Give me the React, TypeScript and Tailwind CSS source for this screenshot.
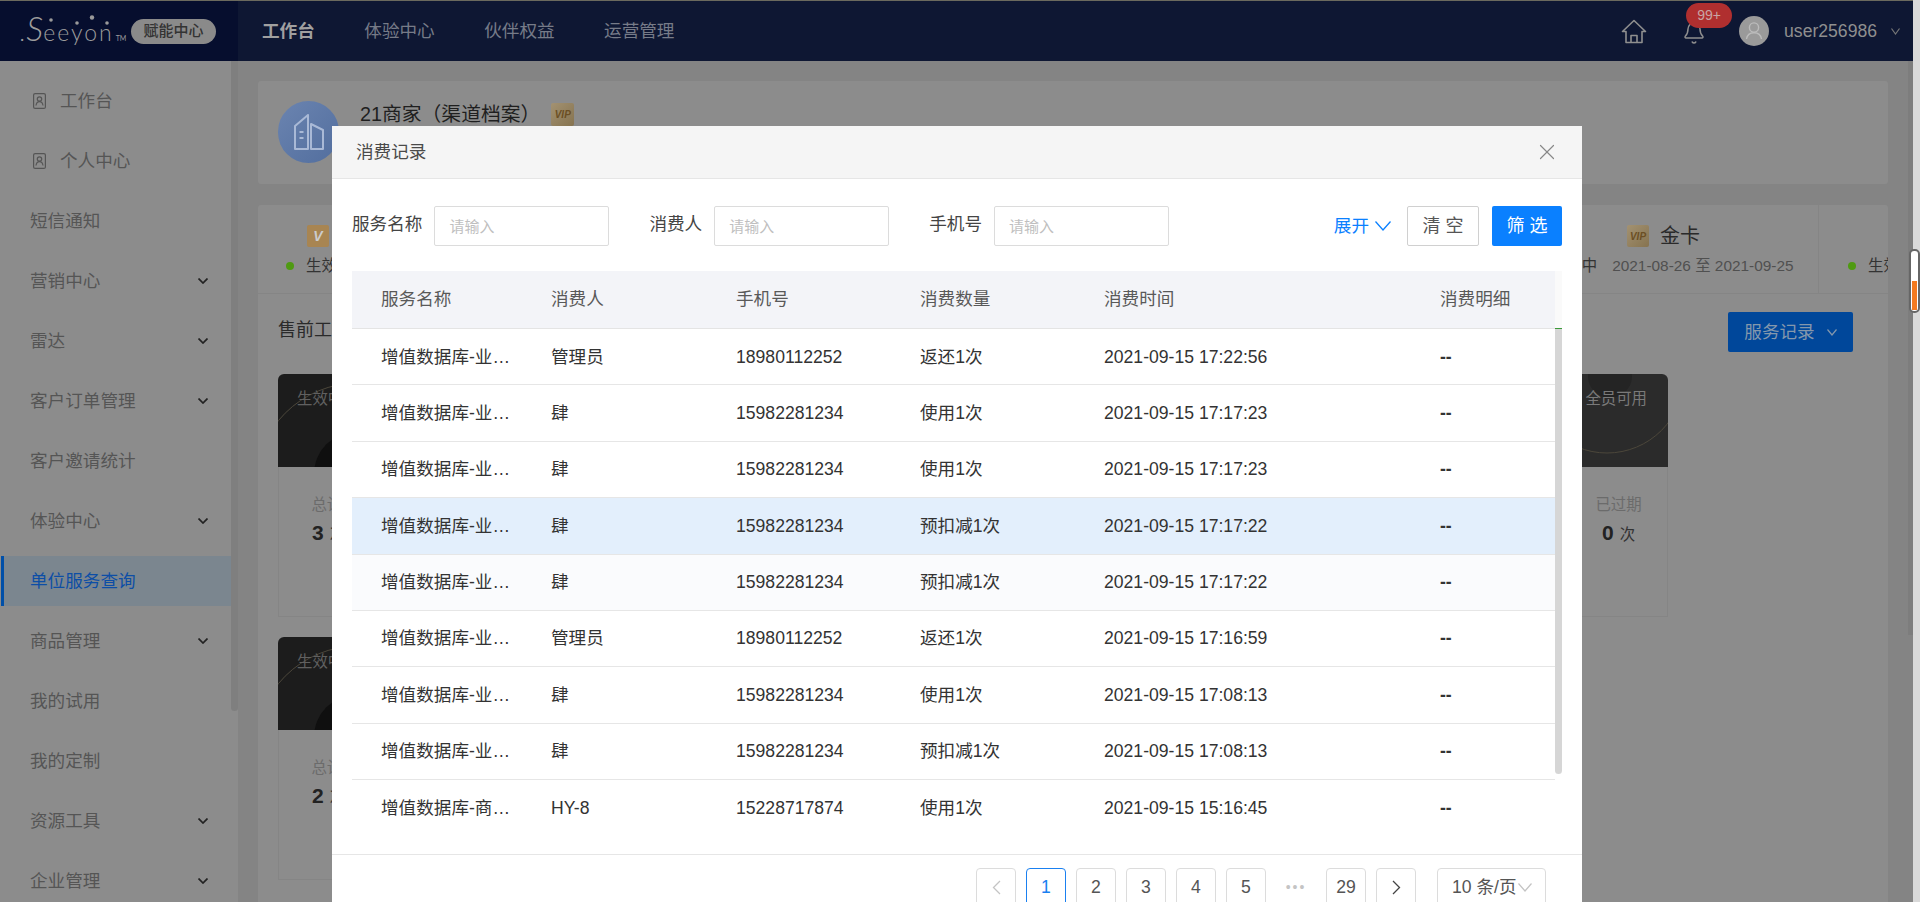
import { Bell, X } from 'lucide-react';

const sideItems = [
  { label: '工作台', icon: true },
  { label: '个人中心', icon: true },
  { label: '短信通知' },
  { label: '营销中心', more: true },
  { label: '雷达', more: true },
  { label: '客户订单管理', more: true },
  { label: '客户邀请统计' },
  { label: '体验中心', more: true },
  { label: '单位服务查询', active: true },
  { label: '商品管理', more: true },
  { label: '我的试用' },
  { label: '我的定制' },
  { label: '资源工具', more: true },
  { label: '企业管理', more: true },
];

const records = [
  ['增值数据库-业务线索', '管理员', '18980112252', '返还1次', '2021-09-15 17:22:56'],
  ['增值数据库-业务线索', '肆', '15982281234', '使用1次', '2021-09-15 17:17:23'],
  ['增值数据库-业务线索', '肆', '15982281234', '使用1次', '2021-09-15 17:17:23'],
  ['增值数据库-业务线索', '肆', '15982281234', '预扣减1次', '2021-09-15 17:17:22'],
  ['增值数据库-业务线索', '肆', '15982281234', '预扣减1次', '2021-09-15 17:17:22'],
  ['增值数据库-业务线索', '管理员', '18980112252', '返还1次', '2021-09-15 17:16:59'],
  ['增值数据库-业务线索', '肆', '15982281234', '使用1次', '2021-09-15 17:08:13'],
  ['增值数据库-业务线索', '肆', '15982281234', '预扣减1次', '2021-09-15 17:08:13'],
  ['增值数据库-商机线索', 'HY-8', '15228717874', '使用1次', '2021-09-15 15:16:45'],
];

const gridCols = 'grid grid-cols-[199px_185px_184px_184px_336px_1fr]';

// the reference uses wide, shallow chevrons, lucide's are too narrow at these sizes
function Chevron({ width, height, color, weight = 1.2 }: { width: number; height: number; color: string; weight?: number }) {
  return (
    <svg className="shrink-0" width={width} height={height} viewBox={`0 0 ${width} ${height}`} fill="none" stroke={color} strokeWidth={weight}>
      <path d={`M0.5 0.5 L${width / 2} ${height - 1} L${width - 0.5} 0.5`} />
    </svg>
  );
}

function PageArrow({ direction, color }: { direction: 'left' | 'right'; color: string }) {
  return (
    <svg width="9" height="15" viewBox="0 0 9 15" fill="none" stroke={color} strokeWidth="1.3">
      <path d={direction === 'left' ? 'M8 1 1.500 7.500 8 14' : 'M1 1l6.500 6.500L1 14'} />
    </svg>
  );
}

function ProfileIcon() {
  return (
    <svg width="13" height="16" viewBox="0 0 13 16" fill="none" stroke="#555" strokeWidth="1.2">
      <rect x="0.6" y="0.6" width="11.800" height="14.800" rx="1.500" />
      <circle cx="6.500" cy="6" r="2.200" />
      <path d="M3 12.500c.4-2.500 1.800-3.800 3.500-3.800s3.100 1.300 3.500 3.800" />
    </svg>
  );
}

function VipBadge({ size = 'h-[22px] w-[22px]' }: { size?: string }) {
  return (
    <span className={`flex shrink-0 items-center justify-center rounded-[2px] bg-gradient-to-br from-[#a39272] to-[#86734f] text-[10px] font-bold italic text-[#6b4f24] ${size}`}>
      VIP
    </span>
  );
}

function Sidebar() {
  return (
    <aside className="relative flex w-[238px] shrink-0 flex-col gap-[10px] overflow-hidden bg-[#8c8c8c] pt-[15px] pr-[7px]">
      {sideItems.map((item) => (
        <div
          key={item.label}
          className={`ml-[1px] flex h-[50px] shrink-0 items-center text-[17.6px] ${
            item.active
              ? 'border-l-[3px] border-[#004fa8] bg-[#7b868f] pl-[26px] text-[#0d4ea6]'
              : 'pl-[29px] text-[#555]'
          }`}
        >
          {item.icon && (
            <span className="mr-[14px] ml-[3px] flex">
              <ProfileIcon />
            </span>
          )}
          <span>{item.label}</span>
          {item.more && (
            <span className="mr-[23px] ml-auto">
              <Chevron width={10} height={6} color="#222" weight={1.7} />
            </span>
          )}
        </div>
      ))}
      <div className="absolute top-0 right-0 h-[650px] w-[7px] rounded-b-[4px] bg-[#7f7f7f]" />
    </aside>
  );
}

function Header() {
  return (
    <header className="flex h-[61px] shrink-0 border-t border-[#6b6a5e] bg-[#0e1733] text-[#8f8f8f]">
      <div className="relative flex w-[238px] shrink-0 items-center bg-[#060e2e] pl-[20px]">
        <svg className="absolute top-[14px] left-[40px]" width="72" height="14" viewBox="0 0 72 14" fill="#9a9a9a">
          <circle cx="11" cy="5" r="1.800" />
          <circle cx="37" cy="8" r="1.800" />
          <circle cx="52" cy="2.500" r="2.200" />
          <circle cx="67" cy="8" r="1.800" />
        </svg>
        <span className="mt-[7px] flex items-baseline font-['Lato',sans-serif] text-[#9c9c9c]">
          <span className="text-[18px]">.</span>
          <span className="ml-[2px] text-[34px] leading-none font-light italic">S</span>
          <span className="text-[23px] leading-none font-light tracking-[2px]">eeyon</span>
          <span className="mb-[14px] ml-[2px] text-[7px]">TM</span>
        </span>
        <span className="absolute top-[18px] left-[131px] flex h-[25px] w-[85px] items-center justify-center rounded-full bg-[#8a8a8a] text-[15px] font-medium text-[#333]">
          赋能中心
        </span>
      </div>
      <nav className="ml-[24px] flex items-center gap-[49.5px] text-[17.6px] text-[#767b88]">
        <span className="font-bold text-[#a0a0a0]">工作台</span>
        <span>体验中心</span>
        <span>伙伴权益</span>
        <span>运营管理</span>
      </nav>
      <div className="ml-auto flex items-center pr-[13px]">
        <svg width="26" height="25" viewBox="0 0 26 25" fill="none" stroke="#8f8f8f" strokeWidth="1.6" strokeLinejoin="round">
          <path d="M1.500 12.500 13 1.500l11.500 11h-3.500v11H5v-11z" />
          <path d="M10 23.500v-7h6v7" />
        </svg>
        <span className="relative ml-[31px] flex w-[32px] justify-center">
          <Bell className="mt-[4px] h-[24px] w-[24px]" strokeWidth={1.5} />
          <span className="absolute -top-[14px] left-[8px] flex h-[25px] w-[46px] items-center justify-center rounded-full bg-[#b02f2f] text-[14px] text-[#c9a5a5]">
            99+
          </span>
        </span>
        <span className="ml-[29px] flex h-[30px] w-[30px] items-center justify-center rounded-full bg-[#9a9a9a]">
          <svg width="18" height="20" viewBox="0 0 18 20" fill="none" stroke="#bcbcbc" strokeWidth="1.400">
            <circle cx="9" cy="6.500" r="4.600" />
            <path d="M1.500 18c.6-4 3.600-6.300 7.500-6.300s6.900 2.300 7.500 6.300" />
          </svg>
        </span>
        <span className="ml-[15px] text-[17.6px]">user256986</span>
        <span className="ml-[14px]">
          <Chevron width={9} height={7} color="#777" />
        </span>
      </div>
    </header>
  );
}

function BenefitCard({ side, label, stat, count }: { side: 'left' | 'right'; label: string; stat: string; count: number }) {
  const right = side === 'right';
  return (
    <div className="h-[243px] w-[333px] overflow-hidden rounded-t-[6px] border-b border-[#858585]">
      <div className={`relative h-[93px] ${right ? 'bg-[#2b2b2b] text-right' : 'bg-[#1c1c1c]'}`}>
        <svg className="absolute inset-0" width="333" height="93" fill="none">
          {right ? (
            <>
              <circle cx="275" cy="2" r="22" fill="#242424" />
              <circle cx="272" cy="2" r="77" stroke="#4c473b" />
            </>
          ) : (
            <>
              <circle cx="78" cy="100" r="42" fill="#0f0f0f" />
              <circle cx="80" cy="112" r="103" stroke="#4c473b" />
            </>
          )}
        </svg>
        <span className={`relative block pt-[13px] text-[15.4px] ${right ? 'pr-[21px] text-[#7a7a7a]' : 'pl-[19px] text-[#606060]'}`}>
          {label}
        </span>
      </div>
      <div className="grid h-[150px] grid-cols-[111px_121px_101px] border-x border-[#858585] pt-[26px] text-center">
        <div className={right ? 'col-start-3' : ''}>
          <p className="text-[15.4px] text-[#6b6b6b]">{stat}</p>
          <p className={`mt-[1px] text-[15.4px] text-[#333] ${right ? '' : 'pr-[12px]'}`}>
            <span className="mr-[6px] text-[21px] font-bold text-[#222]">{count}</span>次
          </p>
        </div>
      </div>
    </div>
  );
}

function MainContent() {
  return (
    <main className="relative flex-1 overflow-hidden bg-[#848484] pt-[20px] pr-[25px] pl-[20px]">
      <section className="flex h-[103px] rounded-[3px] bg-[#8c8c8c] pt-[20px] pl-[20px]">
        <span className="flex h-[62px] w-[61px] items-center justify-center rounded-full bg-gradient-to-br from-[#6b84b0] to-[#526e9e]">
          <svg width="30" height="36" viewBox="0 0 30 36" fill="none" stroke="#a9b9d6" strokeWidth="2" strokeLinejoin="round">
            <path d="M1 35V12L14 1v34z" />
            <path d="M17 35V10l12 6v19z" />
            <path d="M5.500 18h4M5.500 24h4" />
          </svg>
        </span>
        <div className="ml-[21px] flex items-center self-start">
          <span className="text-[19.8px] leading-[26px] text-[#1f1f1f]">21商家（渠道档案）</span>
          <span className="ml-[11px]">
            <VipBadge size="h-[23px] w-[23px]" />
          </span>
        </div>
      </section>

      <section className="mt-[21px] h-[720px] rounded-t-[3px] bg-[#8c8c8c]">
        <div className="flex h-[89px] overflow-hidden border-b border-[#858585]">
          <div className="w-[300px] pt-[20px] pl-[28px] text-[15.4px] text-[#333]">
            <span className="ml-[21px] flex h-[22px] w-[22px] items-center justify-center rounded-[2px] bg-[#a88552] text-[14px] font-bold italic text-[#ccc]">
              V
            </span>
            <span className="mt-[8px] flex h-[22px] items-center gap-[12px]">
              <i className="h-[8px] w-[8px] rounded-full bg-[#4f9a12]" />
              生效中
            </span>
          </div>
          <div className="ml-auto w-[317px] shrink-0 border-r border-[#858585] pt-[20px] pl-[29px]">
            <span className="ml-[96px] flex h-[22px] items-center gap-[11px] text-[20px] text-[#2a2a2a]">
              <VipBadge />
              金卡
            </span>
            <span className="mt-[8px] flex h-[22px] items-center whitespace-nowrap text-[15.4px] text-[#333]">
              <i className="mr-[12px] h-[8px] w-[8px] rounded-full bg-[#4f9a12]" />
              生效中
              <span className="ml-[15px] text-[#505050]">2021-08-26 至 2021-09-25</span>
            </span>
          </div>
          <div className="w-[69px] shrink-0 overflow-hidden whitespace-nowrap pt-[50px] pl-[29px] text-[15.4px] text-[#333]">
            <span className="flex h-[22px] items-center gap-[12px]">
              <i className="h-[8px] w-[8px] shrink-0 rounded-full bg-[#4f9a12]" />
              生效中
            </span>
          </div>
        </div>

        <div className="mt-[18px] flex h-[40px] items-center justify-between pr-[35px] pl-[20px]">
          <h2 className="-mt-[3px] text-[18px] font-normal text-[#2a2a2a]">售前工具</h2>
          <button type="button" className="flex h-[40px] w-[125px] items-center justify-center gap-[12px] rounded-[2px] bg-[#00479a] text-[17.6px] text-[#8498ac]">
            服务记录
            <Chevron width={10} height={7} color="#8498ac" />
          </button>
        </div>

        <div className="mt-[22px] flex flex-col gap-[20px] pr-[220px] pl-[20px]">
          <div className="flex justify-between">
            <BenefitCard side="left" label="生效中" stat="总计量" count={3} />
            <BenefitCard side="right" label="全员可用" stat="已过期" count={0} />
          </div>
          <BenefitCard side="left" label="生效中" stat="总计量" count={2} />
        </div>
      </section>
      <div className="absolute top-0 right-0 h-[574px] w-[5px] bg-[#7d7d7d]" />
    </main>
  );
}

function FilterField({ label }: { label: string }) {
  return (
    <label className="flex items-center gap-[12px]">
      <span className="-mt-[3px] text-[17.6px] text-[#444]">{label}</span>
      <input
        readOnly
        placeholder="请输入"
        className="h-[40px] w-[175px] rounded-[2px] border border-[#dcdcdc] px-[14px] text-[15px] placeholder:text-[#bfbfbf]"
      />
    </label>
  );
}

function RecordsModal() {
  return (
    <div className="absolute top-[126px] left-[332px] z-10 h-[790px] w-[1250px] rounded-t-[3px] bg-white">
      <div className="flex h-[53px] items-center justify-between border-b border-[#e6e6e6] bg-[#f5f5f5] pr-[22px] pl-[24px] text-[17.6px] text-[#4a4a4a]">
        消费记录
        <X className="h-[26px] w-[26px] text-[#888]" strokeWidth={1.1} />
      </div>

      <div className="flex items-center gap-[40px] pt-[27px] pr-[20px] pl-[20px]">
        <FilterField label="服务名称" />
        <FilterField label="消费人" />
        <FilterField label="手机号" />
        <span className="ml-auto flex items-center gap-[6px] text-[17.6px] text-[#0a80ff]">
          展开
          <Chevron width={16} height={10} color="#0a80ff" weight={1.300} />
        </span>
        <div className="-ml-[24px] flex gap-[13px] text-[18px]">
          <button type="button" className="h-[40px] w-[72px] rounded-[2px] border border-[#d0d0d0] text-[#555]">
            清 空
          </button>
          <button type="button" className="h-[40px] w-[70px] rounded-[2px] bg-[#0a80ff] text-white">
            筛 选
          </button>
        </div>
      </div>

      <div className="relative mt-[25px] ml-[20px] w-[1210px]">
        <div className={`${gridCols} h-[58px] w-[1203px] items-center border-b border-[#e4e4e4] bg-[#f3f4f8] pl-[29px] text-[17.6px] text-[#595959]`}>
          <span>服务名称</span>
          <span className="-ml-[29px]">消费人</span>
          <span className="-ml-[29px]">手机号</span>
          <span className="-ml-[29px]">消费数量</span>
          <span className="-ml-[29px]">消费时间</span>
          <span className="-ml-[29px]">消费明细</span>
        </div>
        <div className="absolute top-0 right-0 h-[58px] w-[7px] border-b border-[#3a9a3a] bg-[#fafafa]" />
        <div className="absolute top-[58px] right-0 h-[445px] w-[7px] rounded-b-[4px] bg-[#d6d6d6]" />
        {records.map((row, index) => (
          <div
            key={`${row[4]}-${index}`}
            className={`${gridCols} h-[56.4px] w-[1203px] items-center border-b pl-[29px] text-[17.6px] text-[#333] ${
              index === 3 ? 'bg-[#e3effc]' : index === 4 ? 'bg-[#fafbfd]' : ''
            } ${index === 8 ? 'border-transparent' : 'border-[#e6e6e6]'}`}
          >
            <span className="w-[130px] truncate">{row[0]}</span>
            <span className="-ml-[29px]">{row[1]}</span>
            <span className="-ml-[29px]">{row[2]}</span>
            <span className="-ml-[29px]">{row[3]}</span>
            <span className="-ml-[29px]">{row[4]}</span>
            <span className="-ml-[29px] font-bold">--</span>
          </div>
        ))}
      </div>

      <div className="mt-[17px] flex h-[60px] gap-[10px] border-t border-[#e6e6e6] pt-[13px] pl-[644px] text-[17.6px] text-[#555]">
        <span className="flex h-[40px] w-[40px] items-center justify-center rounded-[4px] border border-[#dcdcdc]">
          <PageArrow direction="left" color="#c4c4c4" />
        </span>
        {['1', '2', '3', '4', '5'].map((page) => (
          <span
            key={page}
            className={`flex h-[40px] w-[40px] items-center justify-center rounded-[4px] border ${
              page === '1' ? 'border-[#1a80f0] text-[#1a80f0]' : 'border-[#dcdcdc]'
            }`}
          >
            {page}
          </span>
        ))}
        <span className="flex h-[40px] w-[40px] items-center justify-center text-[14px] tracking-[2px] text-[#c4c4c4]">•••</span>
        <span className="flex h-[40px] w-[40px] items-center justify-center rounded-[4px] border border-[#dcdcdc]">29</span>
        <span className="flex h-[40px] w-[40px] items-center justify-center rounded-[4px] border border-[#dcdcdc]">
          <PageArrow direction="right" color="#444" />
        </span>
        <span className="ml-[11px] flex h-[40px] w-[109px] items-center rounded-[4px] border border-[#dcdcdc] pl-[14px] whitespace-nowrap">
          10 条/页
          <span className="ml-[1px]">
            <Chevron width={14} height={9} color="#c4c4c4" />
          </span>
        </span>
      </div>
    </div>
  );
}

export default function App() {
  return (
    <div className="relative flex h-[902px] w-[1920px] overflow-hidden font-['Liberation_Sans','Noto_Sans_CJK_SC',sans-serif]">
      <div className="flex w-[1913px] flex-col">
        <Header />
        <div className="flex min-h-0 flex-1">
          <Sidebar />
          <MainContent />
        </div>
      </div>
      <div className="w-[7px] bg-[#d9d9d9]" />
      <RecordsModal />
      <div className="absolute top-[249px] right-0 z-20 flex h-[64px] w-[11px] flex-col items-center justify-end rounded-[5px] border-2 border-[#666] bg-white pb-[1px]">
        <span className="h-[29px] w-[5px] bg-[#f47a20]" />
      </div>
    </div>
  );
}
